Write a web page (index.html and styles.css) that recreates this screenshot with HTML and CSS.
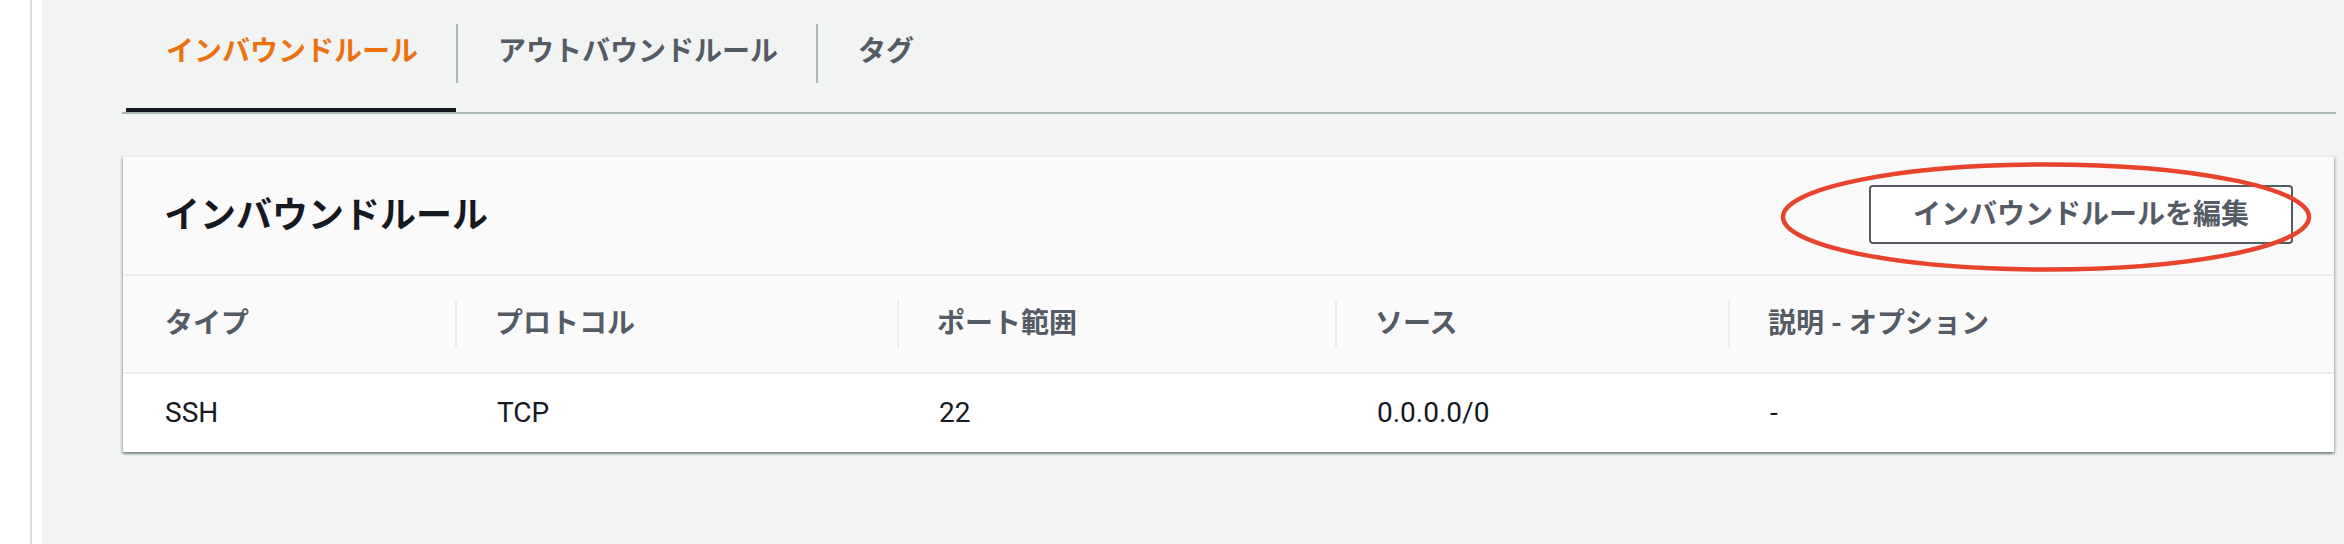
FILE: index.html
```html
<!DOCTYPE html>
<html lang="ja">
<head>
<meta charset="utf-8">
<title>インバウンドルール</title>
<link rel="stylesheet" href="styles.css">
</head>
<body>
<div class="page">
  <div class="rail"></div>
  <main class="main">
    <nav class="tabs">
      <div class="tab active">インバウンドルール</div>
      <span class="tab-sep"></span>
      <div class="tab">アウトバウンドルール</div>
      <span class="tab-sep"></span>
      <div class="tab">タグ</div>
    </nav>
    <section class="card">
      <header class="card-header">
        <h2 class="card-title">インバウンドルール</h2>
        <button class="btn">インバウンドルールを編集</button>
      </header>
      <div class="grid">
        <div class="th first">タイプ</div>
        <div class="th">プロトコル</div>
        <div class="th">ポート範囲</div>
        <div class="th">ソース</div>
        <div class="th">説明 - オプション</div>
        <div class="td first">SSH</div>
        <div class="td">TCP</div>
        <div class="td">22</div>
        <div class="td">0.0.0.0/0</div>
        <div class="td">-</div>
      </div>
      <svg class="highlight" width="532" height="112" viewBox="0 0 532 112" aria-hidden="true">
        <ellipse cx="266" cy="56" rx="263" ry="52.5" fill="none" stroke="#e8432c" stroke-width="4.5"/>
      </svg>
    </section>
  </main>
</div>
</body>
</html>
```

FILE: styles.css
```css
html, body {
  margin: 0;
  padding: 0;
  background: #ffffff;
}

body {
  font-family: Roboto, "Noto Sans CJK JP", sans-serif;
  color: #16191f;
}

.page {
  display: flex;
  min-height: 544px;
  height: 100vh;
}

.rail {
  width: 30px;
  flex: 0 0 30px;
  border-right: 2px solid #dadcdc;
  margin-right: 10px;
  background: #ffffff;
}

.main {
  flex: 1;
  background: #f2f3f3;
  padding: 0 8px 0 80px;
}

.tabs {
  display: flex;
  align-items: flex-start;
  padding-left: 4px;
  border-bottom: 2px solid #aab7b8;
}

.tab {
  height: 76px;
  padding: 32px 38px 0 40px;
  line-height: 40px;
  font-size: 28px;
  font-weight: 700;
  color: #545b64;
  border-bottom: 4px solid transparent;
  white-space: nowrap;
}

.tab.active {
  color: #ec7211;
  border-bottom-color: #16191f;
}

.tab-sep {
  width: 2px;
  height: 59px;
  margin-top: 24px;
  background: #aab7b8;
}

.card {
  position: relative;
  margin: 41px 2px 0 1px;
  background: #ffffff;
  border-top: 2px solid #eaeded;
  box-shadow: 0 2px 2px 0 rgba(0, 28, 36, 0.3), 2px 2px 2px 0 rgba(0, 28, 36, 0.15), -2px 2px 2px 0 rgba(0, 28, 36, 0.15);
}

.card-header {
  display: flex;
  align-items: center;
  justify-content: space-between;
  height: 117px;
  padding: 0 41px;
  background: #fafafa;
  border-bottom: 2px solid #eaeded;
}

.card-title {
  margin: 0;
  font-size: 36px;
  font-weight: 700;
  line-height: 44px;
  color: #16191f;
}

.btn {
  height: 59px;
  padding: 0 42px;
  margin-top: -2px;
  border: 2px solid #545b64;
  border-radius: 4px;
  background: #ffffff;
  font-family: Roboto, "Noto Sans CJK JP", sans-serif;
  font-size: 28px;
  font-weight: 700;
  line-height: 40px;
  color: #545b64;
}

.grid {
  display: grid;
  grid-template-columns: 332px 442px 438px 393px 1fr;
}

.th {
  height: 96px;
  line-height: 96px;
  padding-left: 40px;
  font-size: 28px;
  font-weight: 700;
  color: #545b64;
  white-space: nowrap;
  border-bottom: 2px solid #eaeded;
  background-color: #fafafa;
  background-image: linear-gradient(#eaeded, #eaeded);
  background-repeat: no-repeat;
  background-size: 2px 48px;
  background-position: 0 24px;
}

.th.first {
  padding-left: 42px;
  background-image: none;
}

.td {
  height: 78px;
  line-height: 78px;
  padding-left: 42px;
  font-size: 28px;
  color: #16191f;
  background: #ffffff;
  white-space: nowrap;
}

.highlight {
  position: absolute;
  left: 1657px;
  top: 4px;
  pointer-events: none;
}
```
